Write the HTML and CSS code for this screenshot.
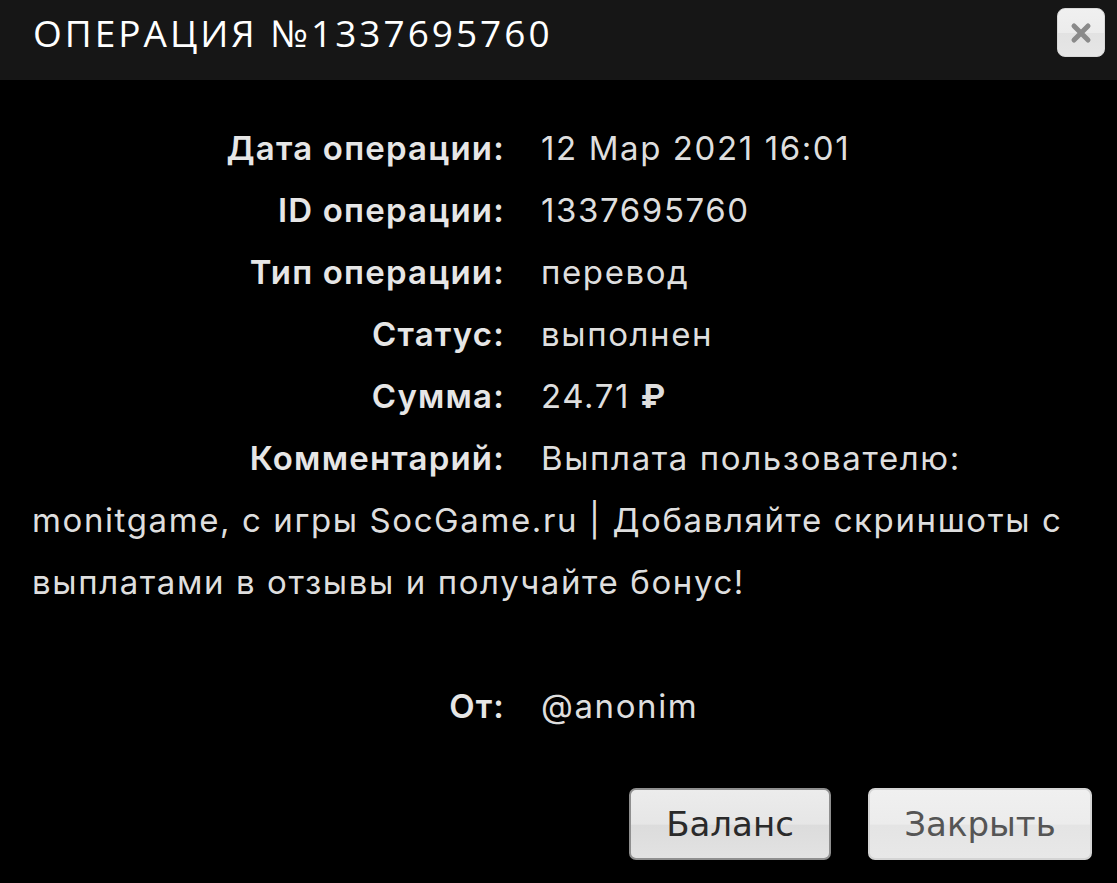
FILE: index.html
```html
<!DOCTYPE html>
<html lang="ru">
<head>
<meta charset="utf-8">
<title>Операция</title>
<link rel="stylesheet" href="styles.css">
</head>
<body>
<div class="dialog">
  <header class="dlg-head">
    <h1 class="dlg-title">ОПЕРАЦИЯ №1337695760</h1>
    <button class="dlg-close" type="button" aria-label="Закрыть">
      <svg width="22" height="22" viewBox="0 0 22 22"><path d="M4 4 L18 18 M18 4 L4 18" stroke="#8a8a8a" stroke-width="5" stroke-linecap="round"/></svg>
    </button>
  </header>
  <main class="dlg-body">
    <div class="row"><span class="lbl">Дата операции:</span><span class="val">12 Мар 2021 16:01</span></div>
    <div class="row"><span class="lbl">ID операции:</span><span class="val">1337695760</span></div>
    <div class="row"><span class="lbl">Тип операции:</span><span class="val">перевод</span></div>
    <div class="row"><span class="lbl">Статус:</span><span class="val">выполнен</span></div>
    <div class="row"><span class="lbl">Сумма:</span><span class="val">24.71 <b class="rub">₽</b></span></div>
    <div class="row"><span class="lbl">Комментарий:</span><span class="val">Выплата пользователю: monitgame, с игры SocGame.ru | Добавляйте скриншоты с выплатами в отзывы и получайте бонус!</span></div>
    <div class="row row-gap"><span class="lbl">От:</span><span class="val">@anonim</span></div>
    <div class="actions">
      <button class="btn btn-primary" type="button">Баланс</button>
      <button class="btn btn-light" type="button">Закрыть</button>
    </div>
  </main>
</div>
</body>
</html>
```
FILE: styles.css
```css
html, body {
  margin: 0;
  padding: 0;
  background: #000;
}
.dialog {
  width: 1117px;
  height: 883px;
  background: #000;
  overflow: hidden;
}
.dlg-head {
  height: 80px;
  background: #161616;
  display: flex;
  align-items: center;
  justify-content: space-between;
  padding: 0 12px 0 33px;
  box-sizing: border-box;
}
.dlg-title {
  margin: 0 0 16px 0;
  color: #fff;
  font-family: "Open Sans", sans-serif;
  font-weight: 400;
  font-size: 37px;
  letter-spacing: 3px;
}
.dlg-close {
  width: 48px;
  height: 49px;
  margin-bottom: 15px;
  border: 1px solid #d8d8d8;
  border-radius: 8px;
  background: linear-gradient(#f0f0f0 0%, #ececec 50%, #e2e2e2 51%, #e6e6e6 100%);
  display: flex;
  align-items: center;
  justify-content: center;
  padding: 0;
}
.dlg-body {
  padding: 37px 32px 0 32px;
  font-family: "Inter", sans-serif;
  font-size: 33px;
  letter-spacing: 1.6px;
  color: #dedede;
  line-height: 62px;
}
.row::after {
  content: "";
  display: block;
  clear: both;
}
.lbl {
  float: left;
  width: 473px;
  margin-right: 36px;
  text-align: right;
  font-weight: 600;
  letter-spacing: 1.2px;
  color: #e6e6e6;
}
.rub {
  font-weight: 700;
}
.row-gap {
  margin-top: 62px;
}
.actions {
  display: flex;
  justify-content: flex-end;
  gap: 37px;
  margin-top: 51px;
  margin-right: -7px;
  letter-spacing: 0;
}
.btn {
  height: 72px;
  border-radius: 7px;
  font-family: "DejaVu Sans", sans-serif;
  font-size: 34px;
  padding: 0;
  background: linear-gradient(#ececec 0%, #e6e6e6 50%, #dcdcdc 52%, #e2e2e2 100%);
}
.btn-primary {
  width: 202px;
  color: #2a2a2a;
  border: 2px solid #8f8f8f;
}
.btn-light {
  width: 224px;
  color: #555;
  border: 2px solid #d4d4d4;
  background: linear-gradient(#f0f0f0 0%, #ececec 50%, #e4e4e4 52%, #e8e8e8 100%);
}
```
